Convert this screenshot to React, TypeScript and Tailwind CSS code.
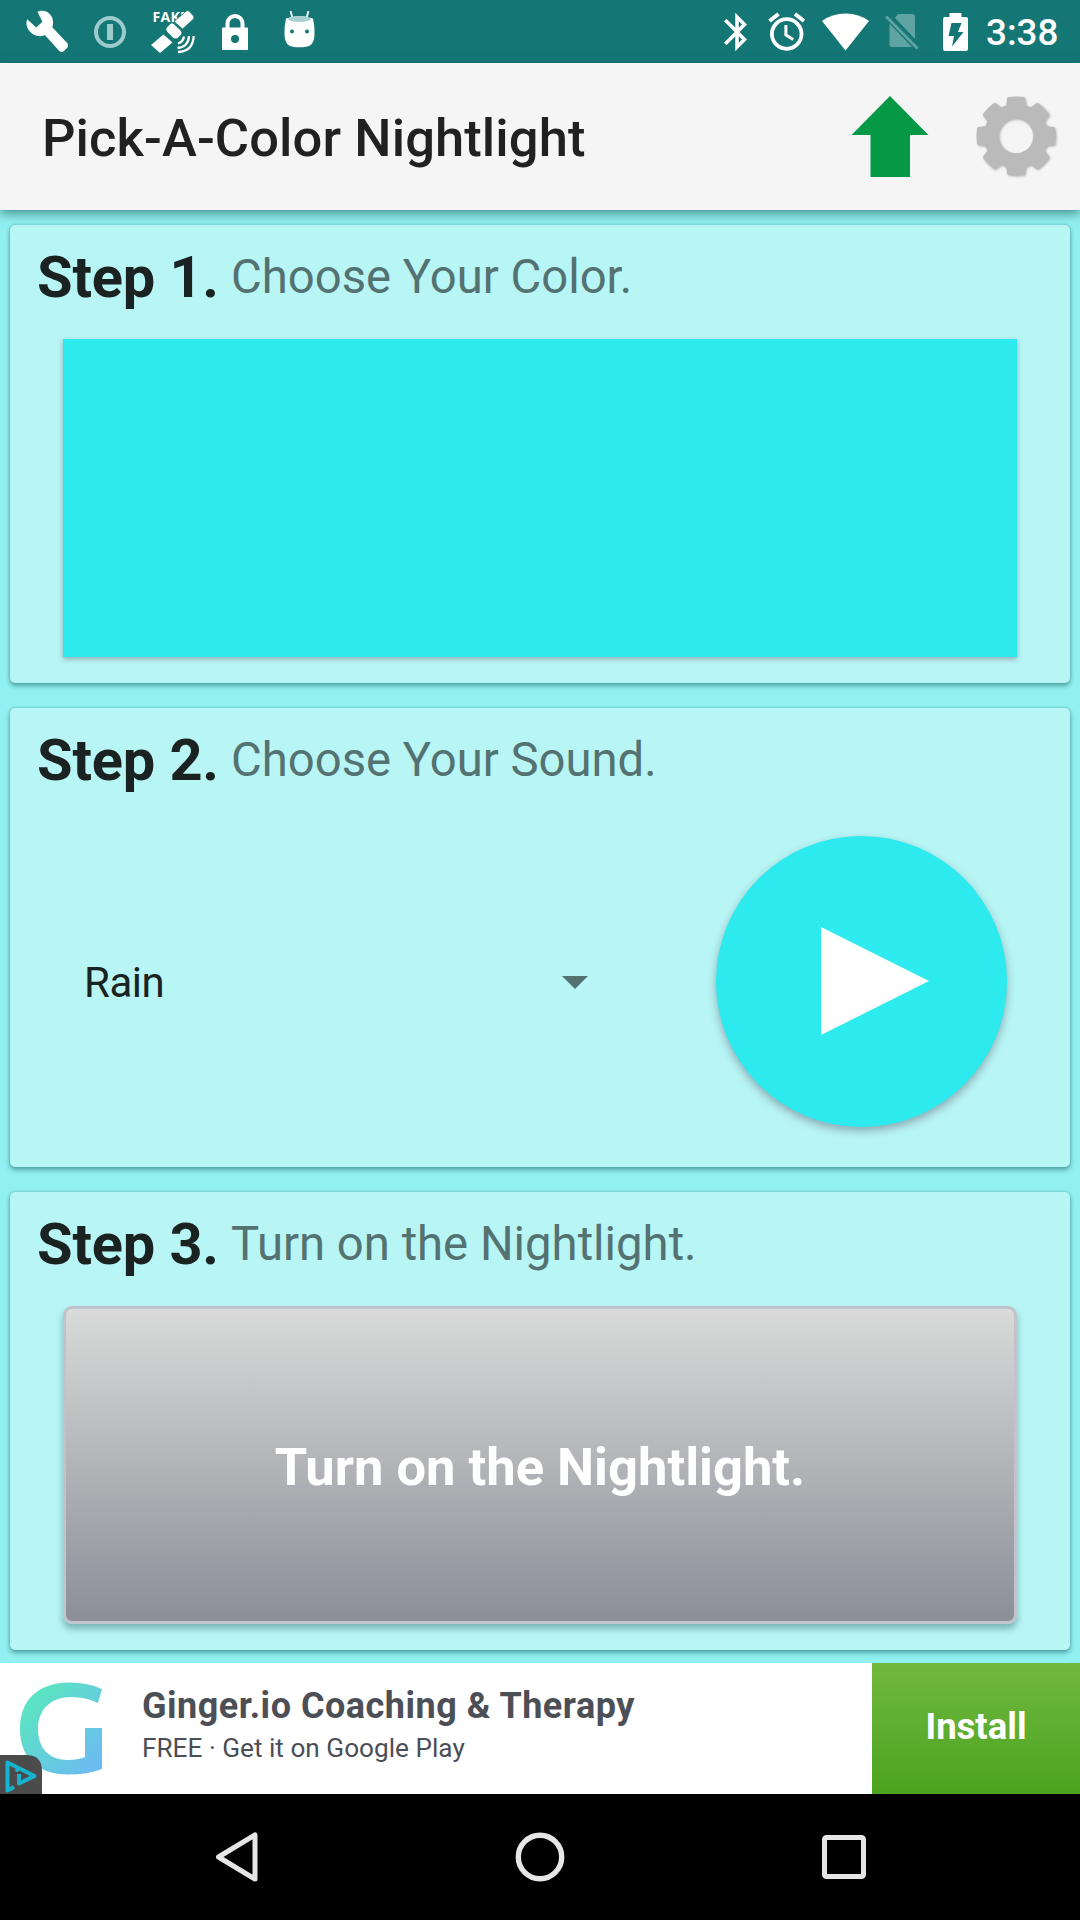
import React from "react";

const WrenchIcon = () => (
  <svg className="ml-[26px] h-[43px] w-[43px]" viewBox="26 10 43 43" fill="#fff">
    <path d="M37.5 11.8c5-2.2 11-.4 13.8 4.2 2.2 3.6 2.2 7.7 1 11.3L67 42.8c1.4 1.5 1.4 3.7.2 5l-3.2 3.3c-1.4 1.3-3.4 1.2-4.7-.2L45 35.3c-4.200 1.500-9.200 1-13-1.800-5-3.700-6.800-9.300-4.800-14.300l9 8.300 6.200-5.800z" />
  </svg>
);

const InfoIcon = () => (
  <svg className="ml-[25px] h-8 w-8" viewBox="0 0 32 32" fill="none" stroke="#9dcaca">
    <circle cx="16" cy="16" r="14" strokeWidth="4" />
    <path d="M16 8v16" strokeWidth="6" />
  </svg>
);

const SatelliteIcon = () => (
  <svg className="ml-[25px] h-[44px] w-[45px] overflow-visible" viewBox="151 11 45 44" fill="#fff">
    <text x="152.500" y="23" fontSize="14" fontWeight="700" letterSpacing="0.300" fontFamily="Open Sans, sans-serif">
      FAKE
    </text>
    <path d="M187 11.500q1.500 0 2.500 1l4 4.500q1 1.500 0 3L182.500 30l-8.500-7.500z" stroke="#147775" strokeWidth="0.800" />
    <path d="M163.500 35.500l9 8L160 54l-9-8z" />
    <path d="M170 24.500q2-1.500 4 0l7 6.500q1.500 2 1 4.500l-4 4q-2 1-5 0l-6-6q-2-2.500-1-5z" stroke="#147775" strokeWidth="1.200" />
    <g fill="none" stroke="#fff" strokeWidth="2.300">
      <path d="M178 44.500q5-1.500 6-7" />
      <path d="M177.500 49q11-1 11.500-12" />
      <path d="M178 53q15-.5 15.700-16" />
    </g>
  </svg>
);

const LockIcon = () => (
  <svg className="ml-[26px] h-[36px] w-[26px]" viewBox="0 0 26 36">
    <path d="M5.500 15V9.500a7.500 7.500 0 0 1 15 0V15" fill="none" stroke="#fff" strokeWidth="4" />
    <path d="M1 13.500h24q1 0 1 1V35q0 1-1 1H1q-1 0-1-1V14.500q0-1 1-1z" fill="#fff" />
    <circle cx="13" cy="25" r="4" fill="#147775" />
  </svg>
);

const RobotIcon = () => (
  <svg className="mb-[6px] ml-[36px] h-[38px] w-[31px]" viewBox="0 0 31 38">
    <path d="M6.500 1l2 7M24.500 1l-2 7" stroke="#fff" strokeWidth="1.800" />
    <path d="M2 8.500q13.500-5 27 0 1.800 7.500 1.500 17Q30 36.500 21 37q-5.500.5-11 0Q1 36.500.5 25.500.200 16 2 8.500z" fill="#fff" />
    <ellipse cx="15.500" cy="9" rx="11.500" ry="3" fill="#a9d0d0" />
    <circle cx="8" cy="21.500" r="2" fill="#147775" />
    <circle cx="23" cy="21.500" r="2" fill="#147775" />
  </svg>
);

const BluetoothIcon = () => (
  <svg className="h-[38px] w-[24px]" viewBox="0 0 24 38" fill="none" stroke="#fff" strokeWidth="3.500">
    <path d="M1.200 7L20.500 26.500 13 34V4l7.500 7.500L1.200 31" />
  </svg>
);

const AlarmIcon = () => (
  <svg className="ml-[20px] h-[39px] w-[38px]" viewBox="0 0 38 39" fill="none" stroke="#fff">
    <circle cx="18.700" cy="22" r="14.800" strokeWidth="3.800" />
    <path d="M17.900 13v10l7.300 4.600" strokeWidth="3" />
    <path d="M1.500 9L10.500 2M27 2l9 7" strokeWidth="4" />
  </svg>
);

const WifiIcon = () => (
  <svg className="ml-[16px] h-[38px] w-[47px]" viewBox="0 0 47 38" fill="#fff">
    <path d="M0 8Q10 .5 23.500.5T47 8L23.500 37.500z" />
  </svg>
);

const NoSimIcon = () => (
  <svg className="ml-[16px] h-[37px] w-[35px]" viewBox="0 0 35 37">
    <path d="M13 1h14.500q2.500 0 2.500 2.500V26L10 5z" fill="#5fa3a2" />
    <path d="M4.500 10.500L27 34H7q-2.500 0-2.500-2.500z" fill="#5fa3a2" />
    <path d="M1.200 3.500L32.500 35.500" stroke="#5fa3a2" strokeWidth="2.800" />
  </svg>
);

const BatteryIcon = () => (
  <svg className="ml-[23px] h-[38px] w-[26px]" viewBox="0 0 26 38">
    <path d="M6.500 0h12v4H23q2 0 2 2v30q0 2-2 2H2q-2 0-2-2V6q0-2 2-2h4.500z" fill="#fff" />
    <path d="M8.500 10h10l-3.500 9h5.500L9 33.500 11 23H5.500z" fill="#147775" />
  </svg>
);

const UpArrow = () => (
  <svg className="h-[82px] w-[78px]" viewBox="0 0 78 82">
    <path d="M39 0l38.500 39H59v42H19.500V39H.5z" fill="#059845" />
  </svg>
);

const GearIcon = () => (
  <svg className="mb-[2px] ml-[47px] h-[80px] w-[80px] drop-shadow-[1px_1px_1px_rgba(0,0,0,0.3)]" viewBox="-40.500 -40.500 81 81" fill="#bababa">
    <circle r="25" fill="none" stroke="#bababa" strokeWidth="15" />
    {[0, 45, 90, 135, 180, 225, 270, 315].map((a) => (
      <path key={a} transform={`rotate(${a})`} d="M-10-30L-9-38Q-9-39.500-7-39.500Q0-40.500 7-39.500Q9-39.500 9-38L10-30z" />
    ))}
  </svg>
);

function StepCard({ n, title, children }: { n: number; title: string; children: React.ReactNode }) {
  return (
    <section className="flex flex-1 flex-col rounded-[5px] bg-[#b8f5f5] shadow-[0_3px_5px_rgba(0,70,70,0.4),0_0_3px_rgba(0,70,70,0.3)]">
      <h2 className="flex h-[113px] shrink-0 items-start pt-[17px] pl-[27px] whitespace-nowrap">
        <span className="w-[194px] text-[57.75px] leading-[70px] font-bold tracking-[-0.15px] text-[#1a2222]">Step {n}.</span>
        <span className="pt-px text-[47.25px] leading-[68px] text-[#537271]">{title}</span>
      </h2>
      {children}
    </section>
  );
}

export default function App() {
  return (
    <div className="flex h-[1920px] w-[1080px] flex-col overflow-hidden bg-[#91f0f0] font-[Roboto,sans-serif]">
      <div className="flex h-[63px] shrink-0 items-center bg-[#147775]">
        <WrenchIcon />
        <InfoIcon />
        <SatelliteIcon />
        <LockIcon />
        <RobotIcon />
        <div className="ml-auto flex items-center pr-[21px]">
          <BluetoothIcon />
          <AlarmIcon />
          <WifiIcon />
          <NoSimIcon />
          <BatteryIcon />
          <span className="ml-[17px] w-[73px] pt-[2px] text-[36.75px] leading-[40px] font-medium text-white">3:38</span>
        </div>
      </div>

      <header className="relative z-10 flex h-[147px] shrink-0 items-center bg-[#f5f5f5] pl-[42px] shadow-[0_4px_10px_rgba(0,60,60,0.5)]">
        <h1 className="pt-[3px] text-[52.5px] leading-[62px] font-medium tracking-[0.1px] whitespace-nowrap text-[#212121]">
          Pick-A-Color Nightlight
        </h1>
        <div className="ml-auto flex items-center pr-[24px]">
          <UpArrow />
          <GearIcon />
        </div>
      </header>

      <main className="flex h-[1453px] shrink-0 flex-col gap-[25px] px-[10px] pt-[15px] pb-[13px]">
        <StepCard n={1} title="Choose Your Color.">
          <div className="mx-[53px] mt-px h-[318px] bg-[#2deaee] shadow-[0_2px_5px_rgba(80,60,80,0.4)]" />
        </StepCard>
        <StepCard n={2} title="Choose Your Sound.">
          <div className="flex h-[320px] items-center pr-[63px] pl-[74px]">
            <span className="w-[478px] pt-[4px] text-[42px] leading-[50px] tracking-[-0.5px] text-[#1a2222]">Rain</span>
            <svg className="mt-[2px] h-[13px] w-[26px]" viewBox="0 0 26 13">
              <path d="M0 0h26L13 13z" fill="#537271" />
            </svg>
            <button className="ml-auto flex size-[291px] items-center justify-center rounded-full bg-[#2deaee] pl-[26px] shadow-[0_4px_9px_rgba(70,60,80,0.4)]">
              <svg className="h-[108px] w-[108px]" viewBox="0 0 108 108">
                <path d="M0 0l108 54L0 108z" fill="#fff" />
              </svg>
            </button>
          </div>
        </StepCard>
        <StepCard n={3} title="Turn on the Nightlight.">
          <div className="px-[53px] pt-px">
            <button className="flex h-[318px] w-full items-center justify-center rounded-[9px] border-[3px] border-[#bfc3cb] bg-linear-to-b from-[#dadbda] to-[#8b8e96] bg-origin-border pt-[5px] text-[52.5px] font-bold text-white shadow-[0_5px_7px_rgba(0,60,60,0.35)]">
              Turn on the Nightlight.
            </button>
          </div>
        </StepCard>
      </main>

      <aside className="relative z-10 flex h-[131px] shrink-0 bg-white">
        <svg className="h-[131px] w-[142px] shrink-0" viewBox="0 0 142 131">
          <defs>
            <linearGradient id="g" x1="0" y1="0" x2="1" y2="1">
              <stop offset="0.200" stopColor="#5ce2c4" />
              <stop offset="0.900" stopColor="#6cbcf0" />
            </linearGradient>
          </defs>
          <path d="M102 26L98 40Q86 34 72 34C50 34 38 47 38 66C38 85 49 97 68 97Q78 97 85 94V65H102V106Q88 111.500 68 111.500C38 111.500 20 95 20 66C20 37 38 19.500 70 19.500Q88 19.500 102 26z" fill="url(#g)" />
          <path d="M0 92H26Q42 92 42 108V131H0z" fill="#4b4b4b" />
          <path d="M14 124L7.500 127.500V99.500L34.500 113L19 120.500V111" fill="none" stroke="#16b4cf" strokeWidth="4" strokeLinejoin="round" />
          <circle cx="17" cy="107" r="2" fill="#16b4cf" />
        </svg>
        <div className="flex flex-1 flex-col pt-[22px] whitespace-nowrap text-[#4c4f56]">
          <span className="text-[36px] leading-[42px] font-bold tracking-[0.5px]">Ginger.io Coaching &amp; Therapy</span>
          <span className="text-[26.2px] leading-[42px]">FREE · Get it on Google Play</span>
        </div>
        <button className="w-[208px] bg-linear-to-b from-[#70b93f] to-[#4ba31d] pb-[2px] text-[36.5px] font-bold text-white">Install</button>
      </aside>

      <nav className="flex h-[126px] shrink-0 items-center bg-black pl-[215px]">
        <svg className="h-[50px] w-[44px]" viewBox="0 0 44 50">
          <path d="M40 3V47L3.500 25z" fill="none" stroke="#e6e6e6" strokeWidth="5" strokeLinejoin="round" />
        </svg>
        <svg className="ml-[256px] h-[50px] w-[50px]" viewBox="0 0 50 50">
          <circle cx="25" cy="25" r="21.700" fill="none" stroke="#e6e6e6" strokeWidth="5.400" />
        </svg>
        <svg className="ml-[257px] h-[44px] w-[44px]" viewBox="0 0 44 44">
          <rect x="2.500" y="2.500" width="39" height="39" rx="2" fill="none" stroke="#e6e6e6" strokeWidth="5" />
        </svg>
      </nav>
    </div>
  );
}
